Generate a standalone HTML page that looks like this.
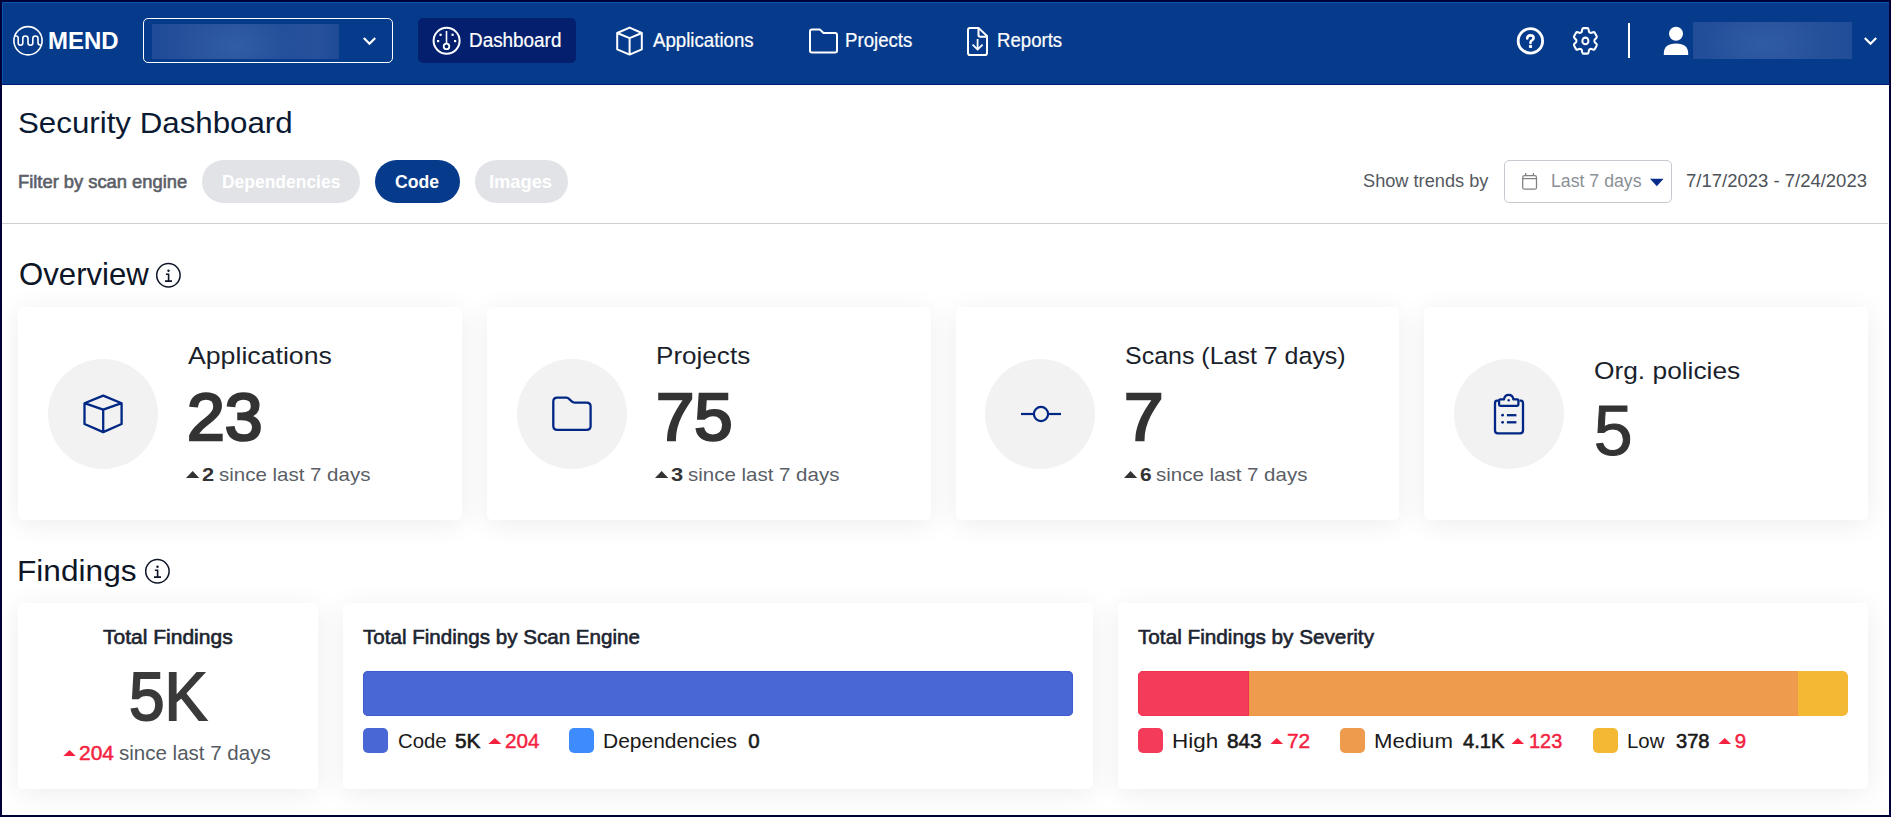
<!DOCTYPE html><html><head><meta charset="utf-8"><style>
html,body{margin:0;padding:0}
body{width:1891px;height:817px;overflow:hidden;background:#000038;position:relative;font-family:"Liberation Sans",sans-serif}
.a{position:absolute}
.t{position:absolute;white-space:pre;font-family:"Liberation Sans",sans-serif}
.card{position:absolute;background:#fff;border-radius:5px;box-shadow:0 4px 28px rgba(0,0,0,0.075)}
.circ{position:absolute;width:110px;height:110px;border-radius:50%;background:#f2f2f2}
.sw{position:absolute;width:25px;height:25px;border-radius:5px}
</style></head><body>
<div class=a style="left:2px;top:2px;width:1887px;height:813px;background:#fff"></div>

<div class=a style='left:2px;top:2px;width:1887px;height:83px;background:#063b8c'></div>
<div class=a style='left:2px;top:2px;width:1887px;height:1px;background:#0b55ac'></div>
<div class=a style='left:2px;top:2px;width:1px;height:82px;background:#0b55ac'></div>
<div class=a style='left:2px;top:84px;width:1887px;height:1px;background:#001c78'></div>
<svg class=a style='left:10px;top:24px' width='36' height='34' viewBox='10 24 36 34'>
<circle cx='28' cy='40.75' r='14.1' fill='none' stroke='#fff' stroke-width='1.6'/>
<path d='M14.2 36 H16 Q18.2 36 18.2 38.2 V43 Q18.2 45.2 20.5 45.2 Q22.8 45.2 22.8 43 V38.5 Q22.8 36 25.4 36 Q28 36 28 38.5 V43 Q28 45.2 30.4 45.2 Q32.8 45.2 32.8 43 V38.5 Q32.8 36 35.4 36 Q38 36 38 38.5 V42.8 Q38 45 40.2 45 H41.8' fill='none' stroke='#fff' stroke-width='1.6'/>
</svg>
<div class=t style="left:48.16px;top:30px;font-size:23.0px;line-height:23.0px;font-weight:700;color:#ffffff;transform:scaleX(1.0424);transform-origin:0 0;">MEND</div>
<div class=a style='left:143px;top:18px;width:248px;height:43px;border:1px solid #fff;border-radius:5px'></div>
<div class=a style='left:152px;top:24px;width:187px;height:35px;background:radial-gradient(ellipse 60px 30px at 85px 22px,rgba(60,110,180,0.35),rgba(0,0,0,0)),linear-gradient(90deg,#1f4a97,#27519b 20%,#2a549d 45%,#234e99 70%,#27519b 88%,#1f4a96)'></div>
<svg class=a style='left:362px;top:36px' width='15' height='11' viewBox='0 0 15 11'><path d='M1.8 2 L7.5 7.7 L13.2 2' fill='none' stroke='#fff' stroke-width='2.2'/></svg>
<div class=a style='left:418px;top:18px;width:158px;height:45px;border-radius:5px;background:#031f6e'></div>
<svg class=a style='left:430px;top:24px' width='34' height='34' viewBox='0 0 34 34'>
<circle cx='16.6' cy='16.8' r='13' fill='none' stroke='#fff' stroke-width='2'/>
<line x1='16.5' y1='7' x2='16.5' y2='19' stroke='#fff' stroke-width='1.6'/>
<circle cx='16.5' cy='22.4' r='2.8' fill='none' stroke='#fff' stroke-width='1.8'/>
<rect x='9.5' y='9.7' width='2.2' height='2.2' fill='#fff'/><rect x='21.5' y='9.7' width='2.2' height='2.2' fill='#fff'/>
<rect x='7' y='16' width='2.2' height='2.2' fill='#fff'/><rect x='24' y='16' width='2.2' height='2.2' fill='#fff'/>
</svg>
<div class=t style="left:469.46px;top:31px;font-size:19.5px;line-height:19.5px;font-weight:400;color:#ffffff;transform:scaleX(0.9685);transform-origin:0 0;-webkit-text-stroke:0.2px #fff;">Dashboard</div>
<svg class=a style='left:612px;top:24px' width='34' height='34' viewBox='0 0 34 34'>
<path d='M17.6 3.6 L29.8 9 V25.4 L17.6 30.6 L5.2 25.4 V9 Z M5.2 9 L17.6 14.2 L29.8 9 M17.6 14.2 V30.6' fill='none' stroke='#fff' stroke-width='2' stroke-linejoin='round'/>
</svg>
<div class=t style="left:653.30px;top:31px;font-size:19.5px;line-height:19.5px;font-weight:400;color:#ffffff;transform:scaleX(0.9571);transform-origin:0 0;-webkit-text-stroke:0.2px #fff;">Applications</div>
<svg class=a style='left:806px;top:24px' width='34' height='34' viewBox='0 0 34 34'>
<path d='M4 7.5 Q4 5.6 6 5.6 H14 L17.5 9 H29 Q31 9 31 11 V26.8 Q31 28.4 29 28.4 H6 Q4 28.4 4 26.8 Z' fill='none' stroke='#fff' stroke-width='2' stroke-linejoin='round'/>
</svg>
<div class=t style="left:845.19px;top:31px;font-size:19.5px;line-height:19.5px;font-weight:400;color:#ffffff;transform:scaleX(0.9559);transform-origin:0 0;-webkit-text-stroke:0.2px #fff;">Projects</div>
<svg class=a style='left:961px;top:24px' width='34' height='34' viewBox='0 0 34 34'>
<path d='M9 3.9 H17.5 L26 12 V29 Q26 31.1 24 31.1 H9 Q7 31.1 7 29 V6 Q7 3.9 9 3.9 Z M17.5 3.9 V11 Q17.5 12.7 19.2 12.7 H26' fill='none' stroke='#fff' stroke-width='2' stroke-linejoin='round'/>
<path d='M16.6 15 V25.5 M11.6 20.6 L16.6 25.6 L21.6 20.6' fill='none' stroke='#fff' stroke-width='1.8'/>
</svg>
<div class=t style="left:996.59px;top:31px;font-size:19.5px;line-height:19.5px;font-weight:400;color:#ffffff;transform:scaleX(0.9545);transform-origin:0 0;-webkit-text-stroke:0.2px #fff;">Reports</div>
<svg class=a style='left:1513px;top:24px' width='34' height='34' viewBox='0 0 34 34'>
<circle cx='17.4' cy='16.9' r='12.2' fill='none' stroke='#fff' stroke-width='2.8'/>
<path d='M14.2 14.4 Q14.2 11.4 17.5 11.4 Q20.6 11.4 20.6 14 Q20.6 15.8 18.6 16.6 Q17.5 17.1 17.5 18.9' fill='none' stroke='#fff' stroke-width='2.6' stroke-linecap='round'/>
<rect x='15.9' y='21' width='3.2' height='3' rx='0.9' fill='#fff'/>
</svg>
<svg class=a style='left:1565px;top:21px' width='40' height='40' viewBox='1565 21 40 40'>
<g transform='translate(1585.4 40.9) scale(1.33 1.42) translate(-12 -12)'>
<path d='M9.594 3.94c.09-.542.56-.94 1.11-.94h2.593c.55 0 1.02.398 1.11.94l.213 1.281c.063.374.313.686.645.87.074.04.147.083.22.127.325.196.72.257 1.075.124l1.217-.456a1.125 1.125 0 0 1 1.37.49l1.296 2.247a1.125 1.125 0 0 1-.26 1.431l-1.003.827c-.293.241-.438.613-.43.992a7.723 7.723 0 0 1 0 .255c-.008.378.137.75.43.991l1.004.827c.424.35.534.955.26 1.43l-1.298 2.247a1.125 1.125 0 0 1-1.369.491l-1.217-.456c-.355-.133-.75-.072-1.076.124a6.470 6.470 0 0 1-.22.128c-.331.183-.581.495-.644.869l-.213 1.281c-.09.543-.56.94-1.11.94h-2.594c-.55 0-1.019-.398-1.11-.94l-.213-1.281c-.062-.374-.312-.686-.644-.87a6.52 6.52 0 0 1-.22-.127c-.325-.196-.72-.257-1.076-.124l-1.217.456a1.125 1.125 0 0 1-1.369-.49l-1.297-2.247a1.125 1.125 0 0 1 .26-1.431l1.004-.827c.292-.24.437-.613.43-.991a6.932 6.932 0 0 1 0-.255c.007-.38-.138-.751-.43-.992l-1.004-.827a1.125 1.125 0 0 1-.26-1.43l1.297-2.247a1.125 1.125 0 0 1 1.37-.491l1.216.456c.356.133.751.072 1.076-.124.072-.044.146-.086.22-.128.332-.183.582-.495.644-.869l.214-1.28Z' fill='none' stroke='#fff' stroke-width='1.5'/>
<circle cx='12' cy='12' r='2.3' fill='none' stroke='#fff' stroke-width='1.45'/>
</g></svg>
<div class=a style='left:1628px;top:23px;width:1.6px;height:35px;background:#fff'></div>
<svg class=a style='left:1659px;top:24px' width='34' height='34' viewBox='0 0 34 34'>
<circle cx='17' cy='9.8' r='7' fill='#fff'/>
<path d='M4.8 31 V29.5 Q4.8 19.4 17 19.4 Q29.2 19.4 29.2 29.5 V31 Z' fill='#fff'/>
</svg>
<div class=a style='left:1693px;top:22px;width:159px;height:37px;background:radial-gradient(ellipse 60px 30px at 70px 22px,rgba(60,110,180,0.3),rgba(0,0,0,0)),linear-gradient(90deg,#214c98,#28529c 30%,#2a549d 55%,#25509a 80%,#214c97)'></div>
<svg class=a style='left:1863px;top:36px' width='15' height='11' viewBox='0 0 15 11'><path d='M1.8 2 L7.5 7.7 L13.2 2' fill='none' stroke='#fff' stroke-width='2.2'/></svg>
<div class=t style="left:18.46px;top:108px;font-size:30.0px;line-height:30.0px;font-weight:400;color:#0b1a33;transform:scaleX(1.0425);transform-origin:0 0;">Security Dashboard</div>
<div class=t style="left:17.75px;top:174px;font-size:17.5px;line-height:17.5px;font-weight:400;color:#5b6068;transform:scaleX(1.0475);transform-origin:0 0;-webkit-text-stroke:0.6px #5b6068;">Filter by scan engine</div>
<div class=a style='left:202px;top:160px;width:158px;height:43px;border-radius:22px;background:#e1e3e7'></div>
<div class=a style='left:375px;top:160px;width:85px;height:43px;border-radius:22px;background:#063b8c'></div>
<div class=a style='left:475px;top:160px;width:93px;height:43px;border-radius:22px;background:#e1e3e7'></div>
<div class=t style="left:221.78px;top:172px;font-size:19.0px;line-height:19.0px;font-weight:700;color:#ffffff;transform:scaleX(0.9189);transform-origin:0 0;">Dependencies</div>
<div class=t style="left:395.17px;top:172px;font-size:19.0px;line-height:19.0px;font-weight:700;color:#ffffff;transform:scaleX(0.9283);transform-origin:0 0;">Code</div>
<div class=t style="left:489.04px;top:172px;font-size:19.0px;line-height:19.0px;font-weight:700;color:#ffffff;transform:scaleX(0.9625);transform-origin:0 0;">Images</div>
<div class=t style="left:1362.96px;top:173px;font-size:17.5px;line-height:17.5px;font-weight:400;color:#55595f;transform:scaleX(1.0392);transform-origin:0 0;">Show trends by</div>
<div class=a style='left:1504px;top:160px;width:166px;height:41px;border:1px solid #c6cad0;border-radius:5px'></div>
<svg class=a style='left:1519px;top:170px' width='22' height='22' viewBox='0 0 22 22'>
<rect x='3.7' y='5.6' width='13.8' height='13.6' rx='1.8' fill='none' stroke='#808080' stroke-width='1.25'/>
<line x1='3.7' y1='8.6' x2='17.5' y2='8.6' stroke='#808080' stroke-width='1.25'/>
<line x1='6.7' y1='3' x2='6.7' y2='5.6' stroke='#808080' stroke-width='1.25'/><line x1='14.4' y1='3' x2='14.4' y2='5.6' stroke='#808080' stroke-width='1.25'/>
</svg>
<div class=t style="left:1550.59px;top:173px;font-size:17.5px;line-height:17.5px;font-weight:400;color:#8b8f96;transform:scaleX(1.0114);transform-origin:0 0;">Last 7 days</div>
<svg class=a style='left:1650px;top:178px' width='14' height='9' viewBox='0 0 14 9'><path d='M0 0.8 H13.6 L6.8 8.2Z' fill='#0a2d8c'/></svg>
<div class=t style="left:1686.47px;top:172px;font-size:18.0px;line-height:18.0px;font-weight:400;color:#4d5157;transform:scaleX(1.0274);transform-origin:0 0;">7/17/2023 - 7/24/2023</div>
<div class=a style='left:2px;top:223px;width:1886px;height:1px;background:#cbcfd4'></div>
<div class=t style="left:18.51px;top:259px;font-size:31.5px;line-height:31.5px;font-weight:400;color:#0d1526;transform:scaleX(0.9892);transform-origin:0 0;">Overview</div>
<svg class=a style='left:154px;top:261px' width='28' height='28' viewBox='0 0 28 28'>
<circle cx='14.4' cy='14.2' r='11.7' fill='none' stroke='#0d1526' stroke-width='1.5'/>
<circle cx='14.5' cy='9.7' r='1.2' fill='#0d1526'/>
<path d='M11.9 13.2 H14.6 V20 M11 20.1 H18' fill='none' stroke='#0d1526' stroke-width='1.6'/>
</svg>
<div class=card style='left:18px;top:307px;width:443.75px;height:213px'></div>
<div class=circ style='left:47.7px;top:358.5px'></div>
<div class=card style='left:486.75px;top:307px;width:443.75px;height:213px'></div>
<div class=circ style='left:516.5px;top:358.5px'></div>
<div class=card style='left:955.5px;top:307px;width:443.75px;height:213px'></div>
<div class=circ style='left:985.2px;top:358.5px'></div>
<div class=card style='left:1424.25px;top:307px;width:443.75px;height:213px'></div>
<div class=circ style='left:1454.0px;top:358.5px'></div>
<svg class=a style='left:78px;top:389px' width='50' height='50' viewBox='0 0 50 50'>
<path d='M25.2 6.6 L43.6 14.2 V35 L25.2 43.1 L6.5 35 V14.2 Z M6.5 14.2 L25.2 20.7 L43.6 14.2 M25.2 20.7 V43.1' fill='none' stroke='#002784' stroke-width='2.3' stroke-linejoin='round'/>
</svg>
<svg class=a style='left:547px;top:389px' width='50' height='50' viewBox='0 0 50 50'>
<path d='M6.3 12.5 Q6.3 8.6 10.3 8.6 H19.5 Q21 8.6 22 9.8 L25 12.6 Q26 13.7 27.5 13.7 H39.6 Q43.6 13.7 43.6 17.6 V37 Q43.6 40.9 39.6 40.9 H10.3 Q6.3 40.9 6.3 37 Z' fill='none' stroke='#002784' stroke-width='2.3' stroke-linejoin='round'/>
</svg>
<svg class=a style='left:1016px;top:389px' width='50' height='50' viewBox='0 0 50 50'>
<line x1='5' y1='25' x2='17.5' y2='25' stroke='#002784' stroke-width='2.2'/>
<line x1='32.5' y1='25' x2='45' y2='25' stroke='#002784' stroke-width='2.2'/>
<circle cx='25' cy='25' r='7.1' fill='none' stroke='#002784' stroke-width='2.2'/>
</svg>
<svg class=a style='left:1484px;top:389px' width='50' height='50' viewBox='0 0 50 50'>
<path d='M14.5 11.6 H13 Q11 11.6 11 14.5 V41.5 Q11 44.4 14 44.4 H36 Q39 44.4 39 41.5 V14.5 Q39 11.6 37 11.6 H35.5' fill='none' stroke='#002784' stroke-width='2.3'/>
<path d='M16.3 10.4 H20 Q20.5 5.8 24.7 5.8 Q28.9 5.8 29.4 10.4 H33.2 Q34.4 10.4 34.4 11.6 V15.6 Q34.4 16.8 33.2 16.8 H16.3 Q15.1 16.8 15.1 15.6 V11.6 Q15.1 10.4 16.3 10.4 Z' fill='none' stroke='#002784' stroke-width='2.3' stroke-linejoin='round'/>
<circle cx='24.7' cy='11.2' r='1.2' fill='#002784'/>
<circle cx='18.6' cy='26.2' r='1.4' fill='#002784'/><circle cx='18.6' cy='33.3' r='1.4' fill='#002784'/>
<line x1='22.9' y1='26.2' x2='32.4' y2='26.2' stroke='#002784' stroke-width='2.3'/>
<line x1='22.9' y1='33.3' x2='32.4' y2='33.3' stroke='#002784' stroke-width='2.3'/>
</svg>
<div class=t style="left:188.20px;top:344px;font-size:24.5px;line-height:24.5px;font-weight:400;color:#1a1f2b;transform:scaleX(1.0885);transform-origin:0 0;">Applications</div>
<div class=t style="left:186.79px;top:383px;font-size:67.5px;line-height:67.5px;font-weight:400;color:#333333;transform:scaleX(1.007);transform-origin:0 0;-webkit-text-stroke:2.6px #333333;">23</div>
<div class=t style="left:201.95px;top:465px;font-size:19.0px;line-height:19.0px;font-weight:700;color:#333333;transform:scaleX(1.15);transform-origin:0 0;">2</div>
<div class=t style="left:219.12px;top:465px;font-size:19.0px;line-height:19.0px;font-weight:400;color:#5a5e66;transform:scaleX(1.0777);transform-origin:0 0;">since last 7 days</div>
<div class=t style="left:656.17px;top:344px;font-size:24.5px;line-height:24.5px;font-weight:400;color:#1a1f2b;transform:scaleX(1.064);transform-origin:0 0;">Projects</div>
<div class=t style="left:655.66px;top:383px;font-size:67.5px;line-height:67.5px;font-weight:400;color:#333333;transform:scaleX(1.0211);transform-origin:0 0;-webkit-text-stroke:2.6px #333333;">75</div>
<div class=t style="left:670.85px;top:465px;font-size:19.0px;line-height:19.0px;font-weight:700;color:#333333;transform:scaleX(1.15);transform-origin:0 0;">3</div>
<div class=t style="left:688.02px;top:465px;font-size:19.0px;line-height:19.0px;font-weight:400;color:#5a5e66;transform:scaleX(1.0777);transform-origin:0 0;">since last 7 days</div>
<div class=t style="left:1124.78px;top:344px;font-size:24.5px;line-height:24.5px;font-weight:400;color:#1a1f2b;transform:scaleX(1.0192);transform-origin:0 0;">Scans (Last 7 days)</div>
<div class=t style="left:1124.20px;top:383px;font-size:67.5px;line-height:67.5px;font-weight:400;color:#333333;transform:scaleX(1.0515);transform-origin:0 0;-webkit-text-stroke:2.6px #333333;">7</div>
<div class=t style="left:1140.10px;top:465px;font-size:19.0px;line-height:19.0px;font-weight:700;color:#333333;transform:scaleX(1.1);transform-origin:0 0;">6</div>
<div class=t style="left:1156.42px;top:465px;font-size:19.0px;line-height:19.0px;font-weight:400;color:#5a5e66;transform:scaleX(1.0777);transform-origin:0 0;">since last 7 days</div>
<div class=t style="left:1593.83px;top:359px;font-size:24.5px;line-height:24.5px;font-weight:400;color:#1a1f2b;transform:scaleX(1.0741);transform-origin:0 0;">Org. policies</div>
<div class=t style="left:1593.80px;top:396px;font-size:70.0px;line-height:70.0px;font-weight:400;color:#333333;-webkit-text-stroke:1px #333333;">5</div>
<svg class=a style='left:186.3px;top:471.1px' width='13.299999999999983' height='6.899999999999977' viewBox='0 0 13.299999999999983 6.899999999999977'><path d='M0 6.899999999999977 L6.6499999999999915 0 L13.299999999999983 6.899999999999977Z' fill='#333'/></svg>
<svg class=a style='left:655.3px;top:471.1px' width='13.300000000000068' height='6.899999999999977' viewBox='0 0 13.300000000000068 6.899999999999977'><path d='M0 6.899999999999977 L6.650000000000034 0 L13.300000000000068 6.899999999999977Z' fill='#333'/></svg>
<svg class=a style='left:1124.4px;top:471.1px' width='13.199999999999818' height='6.899999999999977' viewBox='0 0 13.199999999999818 6.899999999999977'><path d='M0 6.899999999999977 L6.599999999999909 0 L13.199999999999818 6.899999999999977Z' fill='#333'/></svg>
<div class=t style="left:17.19px;top:556px;font-size:30.0px;line-height:30.0px;font-weight:400;color:#0d1526;transform:scaleX(1.0541);transform-origin:0 0;">Findings</div>
<svg class=a style='left:143px;top:557.3px' width='28' height='28' viewBox='0 0 28 28'>
<circle cx='14.4' cy='14.2' r='11.7' fill='none' stroke='#0d1526' stroke-width='1.5'/>
<circle cx='14.5' cy='9.7' r='1.2' fill='#0d1526'/>
<path d='M11.9 13.2 H14.6 V20 M11 20.1 H18' fill='none' stroke='#0d1526' stroke-width='1.6'/>
</svg>
<div class=card style='left:18px;top:603px;width:300px;height:186px'></div>
<div class=card style='left:343px;top:603px;width:750px;height:186px'></div>
<div class=card style='left:1118px;top:603px;width:750px;height:186px'></div>
<div class=t style="left:129.34px;top:662px;font-size:69.0px;line-height:69.0px;font-weight:400;color:#3a3a3a;transform:scaleX(0.9277);transform-origin:0 0;-webkit-text-stroke:1.9px #3a3a3a;">5K</div>
<div class=t style="left:103.20px;top:628px;font-size:19.5px;line-height:19.5px;font-weight:400;color:#1c2430;transform:scaleX(1.0775);transform-origin:0 0;-webkit-text-stroke:0.6px #1c2430;">Total Findings</div>
<div class=t style="left:79.23px;top:744px;font-size:19.5px;line-height:19.5px;font-weight:400;color:#f5223f;transform:scaleX(1.0742);transform-origin:0 0;-webkit-text-stroke:0.45px #f5223f;">204</div>
<div class=t style="left:119.10px;top:743px;font-size:20.5px;line-height:20.5px;font-weight:400;color:#555a63;transform:scaleX(1.0007);transform-origin:0 0;">since last 7 days</div>
<svg class=a style='left:63.3px;top:750px' width='13.100000000000009' height='6.2999999999999545' viewBox='0 0 13.100000000000009 6.2999999999999545'><path d='M0 6.2999999999999545 L6.550000000000004 0 L13.100000000000009 6.2999999999999545Z' fill='#f5223f'/></svg>
<div class=t style="left:362.90px;top:627px;font-size:20.5px;line-height:20.5px;font-weight:400;color:#1c2430;transform:scaleX(1.004);transform-origin:0 0;-webkit-text-stroke:0.6px #1c2430;">Total Findings by Scan Engine</div>
<div class=a style='left:363px;top:671px;width:710px;height:45px;border-radius:5px;background:#4a67d6;box-shadow:inset 0 0 0 1px #3f5bd0'></div>
<div class=sw style='left:363px;top:728px;background:#4a67d6'></div>
<div class=sw style='left:569px;top:728px;background:#3d8bfd'></div>
<div class=t style="left:397.93px;top:730px;font-size:21.0px;line-height:21.0px;font-weight:400;color:#1a1a1a;transform:scaleX(0.9688);transform-origin:0 0;">Code</div>
<div class=t style="left:455.48px;top:731px;font-size:20.5px;line-height:20.5px;font-weight:400;color:#1a1a1a;transform:scaleX(1.0167);transform-origin:0 0;-webkit-text-stroke:0.6px #1a1a1a;">5K</div>
<div class=t style="left:504.69px;top:731px;font-size:20.5px;line-height:20.5px;font-weight:400;color:#f5223f;transform:scaleX(1.0091);transform-origin:0 0;-webkit-text-stroke:0.45px #f5223f;">204</div>
<div class=t style="left:603.10px;top:730px;font-size:21.0px;line-height:21.0px;font-weight:400;color:#1a1a1a;transform:scaleX(0.9985);transform-origin:0 0;">Dependencies</div>
<div class=t style="left:748.20px;top:731px;font-size:20.5px;line-height:20.5px;font-weight:400;color:#1a1a1a;-webkit-text-stroke:0.6px #1a1a1a;">0</div>
<svg class=a style='left:488.3px;top:737.5px' width='13.699999999999989' height='6.2999999999999545' viewBox='0 0 13.699999999999989 6.2999999999999545'><path d='M0 6.2999999999999545 L6.849999999999994 0 L13.699999999999989 6.2999999999999545Z' fill='#f5223f'/></svg>
<div class=t style="left:1138.00px;top:627px;font-size:20.5px;line-height:20.5px;font-weight:400;color:#1c2430;transform:scaleX(1.0103);transform-origin:0 0;-webkit-text-stroke:0.6px #1c2430;">Total Findings by Severity</div>
<div class=a style='left:1138px;top:671px;width:710px;height:45px;border-radius:5px;overflow:hidden;display:flex'><div style='width:111px;background:#f43b5a;box-shadow:inset 0 0 0 1px #f23050'></div><div style='width:549px;background:#ee9b4d;box-shadow:inset 0 0 0 1px #ed9747'></div><div style='width:50px;background:#f4b934;border-radius:0 5px 5px 0'></div></div>
<div class=sw style='left:1138px;top:728px;background:#f43b5a'></div>
<div class=sw style='left:1340px;top:728px;background:#ee9b4d'></div>
<div class=sw style='left:1593px;top:728px;background:#f4b934'></div>
<div class=t style="left:1171.96px;top:730px;font-size:21.0px;line-height:21.0px;font-weight:400;color:#1a1a1a;transform:scaleX(1.07);transform-origin:0 0;">High</div>
<div class=t style="left:1226.99px;top:731px;font-size:20.5px;line-height:20.5px;font-weight:400;color:#1a1a1a;transform:scaleX(1.0121);transform-origin:0 0;-webkit-text-stroke:0.6px #1a1a1a;">843</div>
<div class=t style="left:1286.88px;top:731px;font-size:20.5px;line-height:20.5px;font-weight:400;color:#f5223f;transform:scaleX(1.019);transform-origin:0 0;-webkit-text-stroke:0.45px #f5223f;">72</div>
<div class=t style="left:1373.79px;top:730px;font-size:21.0px;line-height:21.0px;font-weight:400;color:#1a1a1a;transform:scaleX(1.0569);transform-origin:0 0;">Medium</div>
<div class=t style="left:1462.80px;top:731px;font-size:20.5px;line-height:20.5px;font-weight:400;color:#1a1a1a;transform:scaleX(0.981);transform-origin:0 0;-webkit-text-stroke:0.6px #1a1a1a;">4.1K</div>
<div class=t style="left:1528.73px;top:731px;font-size:20.5px;line-height:20.5px;font-weight:400;color:#f5223f;transform:scaleX(0.9727);transform-origin:0 0;-webkit-text-stroke:0.45px #f5223f;">123</div>
<div class=t style="left:1627.26px;top:730px;font-size:21.0px;line-height:21.0px;font-weight:400;color:#1a1a1a;transform:scaleX(0.9703);transform-origin:0 0;">Low</div>
<div class=t style="left:1676.10px;top:731px;font-size:20.5px;line-height:20.5px;font-weight:400;color:#1a1a1a;transform:scaleX(0.9794);transform-origin:0 0;-webkit-text-stroke:0.6px #1a1a1a;">378</div>
<div class=t style="left:1734.80px;top:731px;font-size:20.5px;line-height:20.5px;font-weight:400;color:#f5223f;-webkit-text-stroke:0.45px #f5223f;">9</div>
<svg class=a style='left:1270.4px;top:737.5px' width='13.5' height='6.399999999999977' viewBox='0 0 13.5 6.399999999999977'><path d='M0 6.399999999999977 L6.75 0 L13.5 6.399999999999977Z' fill='#f5223f'/></svg>
<svg class=a style='left:1511.1px;top:737.5px' width='13.5' height='6.399999999999977' viewBox='0 0 13.5 6.399999999999977'><path d='M0 6.399999999999977 L6.75 0 L13.5 6.399999999999977Z' fill='#f5223f'/></svg>
<svg class=a style='left:1718.4px;top:737.5px' width='13.5' height='6.399999999999977' viewBox='0 0 13.5 6.399999999999977'><path d='M0 6.399999999999977 L6.75 0 L13.5 6.399999999999977Z' fill='#f5223f'/></svg>
</body></html>
